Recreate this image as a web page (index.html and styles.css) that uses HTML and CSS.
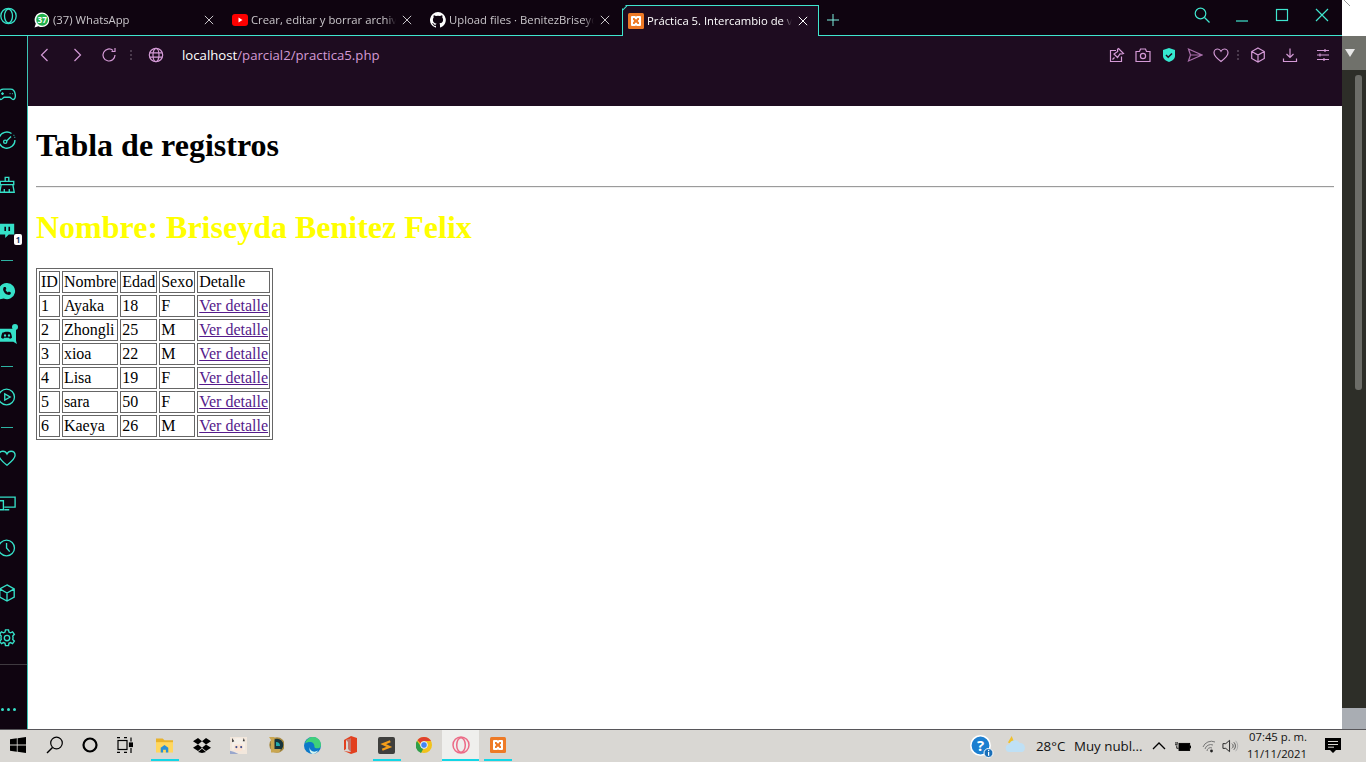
FILE: index.html
```html
<!DOCTYPE html>
<html lang="es">
<head>
<meta charset="utf-8">
<title>Práctica 5. Intercambio de variables</title>
<link rel="stylesheet" href="styles.css">
</head>
<body>
<div class="desktop">
  <div class="window">
    <div class="browser">
      <header class="tabstrip">
        <svg class="opera-logo" viewBox="0 0 18 18" width="18" height="18"><circle cx="8.500" cy="9" r="7.700"/><ellipse cx="8.500" cy="9" rx="4" ry="6.800"/></svg>
        <div class="tab">
          <svg class="favicon" viewBox="0 0 16 16"><path d="M8 .500a7.300 7.300 0 0 1 0 14.600c-1.300 0-2.500-.3-3.600-.9L.5 15.500l1.300-3.800A7.300 7.300 0 0 1 8 .500z" fill="#fff"/><circle cx="8.200" cy="7.800" r="6" fill="#22b14c"/><text x="8.200" y="10.500" class="fav-count">37</text></svg>
          <span class="tab-title">(37) WhatsApp</span>
          <svg class="tab-close" viewBox="0 0 12 12"><path d="M1 1l10 10M11 1L1 11"/></svg>
        </div>
        <div class="tab">
          <svg class="favicon" viewBox="0 0 16 16"><rect y="2" width="16" height="12" rx="3" fill="#f00"/><path d="M6.500 5.500l4 2.500-4 2.500z" fill="#fff"/></svg>
          <span class="tab-title">Crear, editar y borrar archivos en GitHub</span>
          <svg class="tab-close" viewBox="0 0 12 12"><path d="M1 1l10 10M11 1L1 11"/></svg>
        </div>
        <div class="tab">
          <svg class="favicon" viewBox="0 0 16 16"><path fill="#fff" d="M8 0a8 8 0 0 0-2.500 15.600c.4.100.5-.2.500-.4v-1.400c-2.200.5-2.700-1-2.700-1-.4-.9-.9-1.200-.9-1.200-.7-.5.100-.5.100-.5.800.1 1.200.8 1.200.8.700 1.200 1.900.9 2.300.7.100-.5.300-.9.500-1.100-1.800-.2-3.600-.9-3.600-4 0-.9.300-1.600.8-2.100-.1-.2-.4-1 .1-2.100 0 0 .7-.2 2.200.8a7.600 7.600 0 0 1 4 0c1.500-1 2.200-.8 2.200-.8.400 1.100.2 1.900.1 2.100.5.600.8 1.300.8 2.100 0 3.100-1.900 3.700-3.700 3.900.3.300.6.800.6 1.500v2.200c0 .2.100.5.600.4A8 8 0 0 0 8 0z"/></svg>
          <span class="tab-title">Upload files · BenitezBriseyda/parcial2</span>
          <svg class="tab-close" viewBox="0 0 12 12"><path d="M1 1l10 10M11 1L1 11"/></svg>
        </div>
        <div class="tab tab-active">
          <svg class="favicon" viewBox="0 0 16 16"><rect width="16" height="16" rx="1.500" fill="#ee7a26"/><path class="xampp-mark" d="M4 4h3l1 1.500L9 4h3v3.500L11 8l1 .5V12H9l-1-1.500L7 12H4V8.500L5 8 4 7.500z"/></svg>
          <span class="tab-title">Práctica 5. Intercambio de variables</span>
          <svg class="tab-close" viewBox="0 0 12 12"><path d="M1 1l10 10M11 1L1 11"/></svg>
        </div>
        <svg class="new-tab" viewBox="0 0 12 12" width="12" height="12"><path d="M6 0v12M0 6h12"/></svg>
        <div class="win-controls">
          <span class="win-btn"><svg viewBox="0 0 16 16" width="16" height="16"><circle cx="6.500" cy="6.500" r="5.300"/><path d="M10.500 10.500l5 5"/></svg></span>
          <span class="win-btn"><svg viewBox="0 0 16 16" width="16" height="16"><path d="M2 14h12"/></svg></span>
          <span class="win-btn"><svg viewBox="0 0 16 16" width="16" height="16"><rect x="2.500" y="2.500" width="11" height="11"/></svg></span>
          <span class="win-btn"><svg viewBox="0 0 16 16" width="16" height="16"><path d="M2 2l12 12M14 2L2 14"/></svg></span>
        </div>
      </header>
      <div class="browser-body">
        <nav class="sidebar">
          <span class="side-item"><svg viewBox="0 0 20 20"><path d="M6 3.500h8c3 0 4.700 2.500 5.200 6 .4 3-.6 5.500-2.400 5.500-1.700 0-2.300-2.500-4-2.500H7.200c-1.700 0-2.300 2.500-4 2.500C1.400 15 .4 12.500.8 9.500c.5-3.500 2.200-6 5.200-6z"/><path d="M5 7v3M3.500 8.500h3M13 8.500h.8M15.500 8.500h.8"/></svg></span>
          <span class="side-item"><svg viewBox="0 0 20 20"><path d="M15 2.800A9 9 0 1 0 18.800 10M9.500 11l5-5"/><circle cx="8" cy="12" r="1.800"/><path d="M18.300 7h.8M17.300 4.800h.8"/></svg></span>
          <span class="side-item"><svg viewBox="0 0 20 20"><path d="M8 6V1.500h4V6M2.500 6h15v3.500h-15zM3.500 9.500L2 18h16l-1.500-8.500M7 18v-3.500M12.500 18v-3.500"/></svg></span>
          <span class="side-item"><svg viewBox="0 0 20 20"><path class="solid" d="M2 2h16v12h-6l-4 4v-4H2z" transform="translate(0 1)"/><path class="cut" d="M8 6.500v4.500M12.500 6.500v4.500"/></svg><span class="side-badge">1</span></span>
          <span class="side-sep"></span>
          <span class="side-item"><svg viewBox="0 0 20 20"><path class="solid" d="M10 1a9 9 0 1 1-3.700 17.200L0 19.500l1.700-5.300A9 9 0 0 1 10 1z"/><path class="solid-dark" d="M6.500 5.500l2 .1.800 2.200-1 1.200c.6 1.200 1.500 2 2.600 2.600l1.200-1 2.200 1-.2 1.800c-.8 1-2 1.200-3 .9-2.800-.8-4.500-2.500-5.300-5.100-.3-1.200 0-2.300.7-3.700z"/></svg></span>
          <span class="side-item"><svg viewBox="0 0 20 20"><path class="solid" d="M0 2h20v13l1 4-4-2.500H0z"/><path class="solid-dark" d="M6 6c1-.5 2-.8 2.500-.8h3c.5 0 1.500.3 2.500.8 1 1.800 1.500 4 1.500 6-.7.700-1.700 1-2.500 1l-.7-1H6.700l-.7 1c-.8 0-1.800-.3-2.500-1 0-2 .5-4.200 1.500-6z"/><ellipse class="solid" cx="7.800" cy="9.500" rx="1.200" ry="1.400"/><ellipse class="solid" cx="12.200" cy="9.500" rx="1.200" ry="1.400"/></svg><span class="side-dot"></span></span>
          <span class="side-sep"></span>
          <span class="side-item"><svg viewBox="0 0 20 20"><circle cx="9.500" cy="10" r="8.800"/><path d="M7.500 6.500l6 3.500-6 3.500z"/></svg></span>
          <span class="side-sep"></span>
          <span class="side-item"><svg viewBox="0 0 20 20"><path d="M10 18C5 14 1 11 1 7c0-3 2-4.500 4.500-4.500 2 0 3.500 1 4.500 3 1-2 2.500-3 4.500-3C17 2.500 19 4 19 7c0 4-4 7-9 11z"/></svg></span>
          <span class="side-item"><svg viewBox="0 0 20 20"><path d="M1 3.500h18v11H7M12.500 17.500H7M1 7.500h5v10H1z"/></svg></span>
          <span class="side-item"><svg viewBox="0 0 20 20"><circle cx="9.500" cy="10" r="8.800"/><path d="M9.500 4.500V10l3.500 4"/></svg></span>
          <span class="side-item"><svg viewBox="0 0 20 20"><path d="M10 1l8 4.500v9L10 19l-8-4.500v-9zM2 5.500l8 4.500 8-4.500M10 10v9"/></svg></span>
          <span class="side-item"><svg viewBox="0 0 20 20"><circle cx="10" cy="10" r="3"/><path d="M8.300 1h3.400l.5 2.500 1.700.8 2.300-1.200 2 2.800-1.800 1.800.3 2-.3 2 1.800 1.800-2 2.800-2.300-1.200-1.700.8-.5 2.500H8.300l-.5-2.500-1.700-.8-2.300 1.200-2-2.800 1.800-1.800-.3-2 .3-2-1.800-1.800 2-2.800 2.300 1.200 1.700-.8z"/></svg></span>
          <span class="side-rule"></span>
          <span class="side-more"><i></i><i></i><i></i></span>
        </nav>
        <div class="content">
          <div class="toolbar">
            <span class="tool"><svg viewBox="0 0 16 16"><path d="M10.500 2L4.500 8l6 6"/></svg></span>
            <span class="tool"><svg viewBox="0 0 16 16"><path d="M5.500 2l6 6-6 6"/></svg></span>
            <span class="tool"><svg viewBox="0 0 16 16"><path d="M14 8A6 6 0 1 1 12 3.500M14 1v3.500h-3.500"/></svg></span>
            <span class="tool-dots"><i></i><i></i><i></i></span>
            <span class="tool tool-globe"><svg viewBox="0 0 16 16"><circle cx="8" cy="8" r="6.700"/><ellipse cx="8" cy="8" rx="3" ry="6.700"/><path d="M1.800 5.800h12.400M1.800 10.200h12.400"/></svg></span>
            <span class="url"><b>localhost</b>/parcial2/practica5.php</span>
            <div class="tool-right">
              <span class="tool-small"><svg viewBox="0 0 16 16"><path d="M7 3.500H1.500v11h11V9.500"/><path d="M9.500 1.500l5 5-1.300.5-2.200-.2-2.500 3.700-3.500-3.500 3.700-2.500-.2-2.200zM5.500 10.500L3.500 12.500"/></svg></span>
              <span class="tool-small"><svg viewBox="0 0 16 16"><path d="M1 4.500h3.500l1-2.500h5l1 2.500H15v10H1z"/><circle cx="8" cy="9" r="2.600"/></svg></span>
              <span class="tool-small"><svg viewBox="0 0 16 16"><path class="shield" d="M8 1l6 2v6c0 3-3 5-6 6-3-1-6-3-6-6V3z"/><path class="shield-check" d="M5 8l2.200 2.200L11 6.500"/></svg></span>
              <span class="tool-small tool-dim"><svg viewBox="0 0 16 16"><path d="M1.500 2l13.500 6-13.500 6L3.500 8zM3.500 8H15"/></svg></span>
              <span class="tool-small"><svg viewBox="0 0 16 16"><path d="M8 14.500C4 11.500 1 9.200 1 5.800 1 3.300 3 2 4.700 2c1.500 0 2.500.8 3.300 2.200C8.800 2.800 9.800 2 11.300 2 13 2 15 3.300 15 5.800c0 3.400-3 5.700-7 8.700z"/></svg></span>
              <span class="tool-dots tool-dots-right"><i></i><i></i><i></i></span>
              <span class="tool-wide"><svg viewBox="0 0 16 16"><path d="M8 1l6.300 3.500v7L8 15l-6.300-3.500v-7zM1.700 4.500L8 8l6.300-3.500M8 8v7"/></svg></span>
              <span class="tool-wide"><svg viewBox="0 0 16 16"><path d="M8 1.500v8.500M4.500 7L8 10.500 11.500 7M1.500 11.500v3h13v-3"/></svg></span>
              <span class="tool-wide"><svg viewBox="0 0 16 16"><path d="M2 3.500h12M2 8h12M2 12.500h12M10 2v3M5 6.500v3M9 11v3"/></svg></span>
            </div>
          </div>
          <main class="page">
            <h1 class="title">Tabla de registros</h1>
            <hr class="rule">
            <h1 class="title title-name">Nombre: Briseyda Benitez Felix</h1>
            <table class="records">
              <tr><td>ID</td><td>Nombre</td><td>Edad</td><td>Sexo</td><td>Detalle</td></tr>
              <tr><td>1</td><td>Ayaka</td><td>18</td><td>F</td><td><a href="#d1">Ver detalle</a></td></tr>
              <tr><td>2</td><td>Zhongli</td><td>25</td><td>M</td><td><a href="#d2">Ver detalle</a></td></tr>
              <tr><td>3</td><td>xioa</td><td>22</td><td>M</td><td><a href="#d3">Ver detalle</a></td></tr>
              <tr><td>4</td><td>Lisa</td><td>19</td><td>F</td><td><a href="#d4">Ver detalle</a></td></tr>
              <tr><td>5</td><td>sara</td><td>50</td><td>F</td><td><a href="#d5">Ver detalle</a></td></tr>
              <tr><td>6</td><td>Kaeya</td><td>26</td><td>M</td><td><a href="#d6">Ver detalle</a></td></tr>
            </table>
          </main>
        </div>
      </div>
    </div>
    <aside class="behind">
      <div class="behind-top"><svg viewBox="0 0 8 8" width="8" height="8"><path d="M1 0l6 6"/></svg></div>
      <div class="behind-head"><span class="arrow"></span></div>
      <div class="behind-track"><span class="thumb"></span></div>
      <div class="behind-foot"></div>
    </aside>
  </div>
  <footer class="taskbar">
    <span class="slot slot-start"><svg viewBox="0 0 16 16" width="16" height="16"><path fill="#000" d="M0 2.300l6.800-1v6.300H0zM7.600 1.200L16 0v7.600H7.600zM0 8.400h6.800v6.300l-6.800-1zM7.600 8.400H16V16l-8.400-1.200z"/></svg></span>
    <span class="slot"><svg viewBox="0 0 18 18" width="18" height="18"><circle cx="10.500" cy="7" r="5.800" fill="none" stroke="#000" stroke-width="1.200"/><path d="M6.500 11.500L1 17" stroke="#000" stroke-width="1.400"/></svg></span>
    <span class="slot slot-narrow slot-cortana"><svg viewBox="0 0 16 16" width="16" height="16"><circle cx="8" cy="8" r="6.500" fill="none" stroke="#000" stroke-width="2.200"/></svg></span>
    <span class="slot slot-narrow"><svg viewBox="0 0 16 16" width="16" height="16" fill="none" stroke="#000" stroke-width="1.200"><path d="M0 .6h3M7 .6h3M0 15.400h3M7 15.400h3"/><rect x="1" y="3.500" width="9" height="9"/><path d="M14 .5v4M14 11v5"/><rect x="12.500" y="6" width="3" height="3.500" fill="#000"/></svg></span>
    <span class="slot slot-open slot-files"><svg viewBox="0 0 18 16" width="17" height="16"><path fill="#e8b22a" d="M0 1h7l2 2h9v4H0z"/><path fill="#ffd75e" d="M0 5h18v11H0z"/><path fill="#2a8fd8" d="M5 16v-5l4-3 4 3v5h-2.500v-3h-3v3z"/></svg></span>
    <span class="slot"><svg viewBox="0 0 18 16" width="18" height="16" fill="#000"><path d="M5 1L0 4.300l5 3.200 4-3.200zM13 1L9 4.300l4 3.200 5-3.200zM0 10.700L5 14l4-3.300-4-3.200zM18 10.700L13 14l-4-3.300 4-3.200zM5 15l4 1 4-1-4-3.300z"/></svg></span>
    <span class="slot"><svg viewBox="0 0 16 16" width="17" height="17"><rect width="16" height="16" fill="#f2e7dc"/><path fill="#f5efe8" d="M2 6c0-4 3-5 6-5s6 1 6 5v6H2z"/><path fill="#fbe3d3" d="M4 7h8v5c-2 2-6 2-8 0z"/><circle cx="6" cy="9.500" r="1" fill="#3e4d8c"/><circle cx="10.500" cy="9.500" r="1" fill="#3e4d8c"/><path fill="#9aa7cc" d="M0 16v-3l4 1 4 2z"/><path fill="#333" d="M2 1l2 3-2 1zM13 1l1 3-2 0z"/></svg></span>
    <span class="slot"><svg viewBox="0 0 16 18" width="16" height="18"><circle cx="9" cy="9" r="7" fill="#16343c" stroke="#a8893f" stroke-width="1.400"/><path fill="#c9a650" d="M1 1h5.500v12H13l-2 3.500H3V4z"/><path fill="#2aa" d="M8 6a4 4 0 0 1 4 4H8z"/></svg></span>
    <span class="slot"><svg viewBox="0 0 16 16" width="17" height="17"><circle cx="8" cy="8" r="8" fill="#0c78c8"/><path fill="#3fd07a" d="M1 6c1-3.500 4-6 7.500-6C12.500 0 16 3 16 7.500c0 2-1.500 3.200-3.500 3.200-1.500 0-2.700-.6-2.700-1.600C10 7 8.500 4.800 5.800 4.800 3.700 4.800 2 5.500 1 6z"/><path fill="#d6f4f0" d="M5.200 9.500c0 2.500 2 4.300 4.500 4.300 1.300 0 2.500-.4 3.500-1.100-1 2-3 3.300-5 3.300-2.500-.5-3.300-3.500-3-6.500z"/></svg></span>
    <span class="slot"><svg viewBox="0 0 14 18" width="14" height="18"><path fill="#e2401f" d="M8 0l6 2v14l-6 2-7-3 7 1V2.500L3 4v9l-2 1.500V4z"/><path fill="#b32314" d="M3 4l5-1.500V16l-3-3V6z" opacity=".55"/></svg></span>
    <span class="slot slot-open"><svg viewBox="0 0 18 18" width="17" height="17"><rect width="18" height="18" rx="2" fill="#3f3f3d"/><path fill="none" stroke="#f59e1b" stroke-width="2.400" d="M13 4.500L5.500 7.500l6.500 3-7.500 3"/></svg></span>
    <span class="slot"><svg viewBox="0 0 16 16" width="16" height="16"><circle cx="8" cy="8" r="8" fill="#f1c21b"/><path fill="#e0402f" d="M8 0a8 8 0 0 1 7 4H8a4 4 0 0 0-3.600 2.200L1.500 3.200A8 8 0 0 1 8 0z"/><path fill="#2f9e4a" d="M1 4l3.300 4.500a4 4 0 0 0 3 3.300L5 16A8 8 0 0 1 1 4z"/><circle cx="8" cy="8" r="3.400" fill="#4285f4" stroke="#fff" stroke-width=".9"/></svg></span>
    <span class="slot slot-active"><svg viewBox="0 0 18 18" width="18" height="18" fill="none" stroke="#ec6a86" stroke-width="1.500"><circle cx="9" cy="9" r="8"/><ellipse cx="9" cy="9" rx="4.300" ry="7.300"/></svg></span>
    <span class="slot slot-open"><svg viewBox="0 0 16 16" width="16" height="16"><rect width="16" height="16" rx="1.500" fill="#ee7a26"/><path class="xampp-mark" d="M4 4h3l1 1.500L9 4h3v3.500L11 8l1 .5V12H9l-1-1.500L7 12H4V8.500L5 8 4 7.500z"/></svg></span>
    <div class="tray">
      <span class="tray-help"><svg viewBox="0 0 24 24" width="24" height="24"><circle cx="10.500" cy="10.500" r="9.700" fill="#1c7fd0" stroke="#fff" stroke-width="1.600"/><text x="10.500" y="16" class="help-q">?</text><circle cx="18.500" cy="18" r="4.500" fill="#1a6fb8" stroke="#fff" stroke-width="1"/><rect x="18" y="16.800" width="1.200" height="4" fill="#fff"/><rect x="18" y="14.800" width="1.200" height="1.200" fill="#fff"/></svg></span>
      <span class="tray-cloud"><svg viewBox="0 0 24 20" width="23" height="19"><path d="M4 8L8 1l2 5 5 1-5 3z" fill="#f0c02c"/><path d="M6 18a4 4 0 0 1-.5-8 6 6 0 0 1 11-1.500A5 5 0 0 1 19 18z" fill="#bfe0f5"/></svg></span>
      <span class="tray-temp">28°C</span>
      <span class="tray-weather">Muy nubl...</span>
      <span class="tray-icon tray-caret"><svg viewBox="0 0 14 8" width="14" height="8"><path d="M1 7l6-6 6 6" fill="none" stroke="#000" stroke-width="1.300"/></svg></span>
      <span class="tray-icon tray-batt"><svg viewBox="0 0 18 12" width="16" height="11"><path d="M0 4h3M1 1v2M2.500 1v2M2 5v3h2" fill="none" stroke="#000"/><rect x="4.500" y="2.500" width="12" height="8" fill="#000" stroke="#000"/><rect x="16.500" y="5" width="1.500" height="3" fill="#000"/></svg></span>
      <span class="tray-icon tray-wifi"><svg viewBox="0 0 14 14" width="14" height="14" fill="none" stroke="#777" stroke-width="1"><path d="M1 8a9 9 0 0 1 12-5M3 10a6 6 0 0 1 8-4M5 12a3.500 3.500 0 0 1 5-3"/><circle cx="9.500" cy="12" r="1.400" fill="#222" stroke="none"/></svg></span>
      <span class="tray-icon tray-sound"><svg viewBox="0 0 18 14" width="17" height="14" fill="none" stroke="#222"><path d="M1 4.500h3L8 1v12L4 9.500H1z"/><path d="M10.500 4.500a3 3 0 0 1 0 5M12.500 3a5.500 5.500 0 0 1 0 8" stroke="#555"/><path d="M14.500 1.500a8 8 0 0 1 0 11" stroke="#aaa"/></svg></span>
      <span class="clock"><span>07:45 p. m.</span><span>11/11/2021</span></span>
      <span class="tray-note"><svg viewBox="0 0 16 16" width="16" height="16"><path fill="#000" d="M0 0h16v12h-5l-3 3-3-3H0z"/><path d="M3 3.500h10M3 6.500h10M3 9.200h6" stroke="#d9d7d3" stroke-width="1"/></svg></span>
    </div>
  </footer>
</div>
</body>
</html>
```
FILE: styles.css
```css
* { box-sizing: border-box; }
html, body { margin: 0; padding: 0; height: 100%; overflow: hidden; }
body { font-family: "Liberation Serif", serif; background: #fff; }

.desktop { width: 1366px; height: 762px; display: flex; flex-direction: column; }
.window { flex: 1; display: flex; min-height: 0; }
.browser { width: 1342px; display: flex; flex-direction: column; }

/* tab strip */
.tabstrip {
  height: 36px; background: #0f0410; display: flex; padding-left: 28px; padding-top: 5px;
  position: relative; font-family: "Open Sans", sans-serif; font-size: 11.300px; color: #c9c6ca;
  border-bottom: 1px solid #3fe6cf; flex: none;
}
.opera-logo { position: absolute; left: 0; top: 7px; fill: none; stroke: #35e0c8; stroke-width: 1.300; }
.tab { width: 198px; height: 30px; display: flex; align-items: center; padding: 0 0 1px 6px; flex: none; }
.favicon { width: 16px; height: 16px; flex: none; margin-right: 3px; }
.fav-count { font: bold 8px "Open Sans", sans-serif; fill: #fff; text-anchor: middle; }
.xampp-mark { fill: none; stroke: #fff; stroke-width: 2; stroke-linejoin: round; }
.tab-title {
  flex: 1; min-width: 0; white-space: nowrap; overflow: hidden;
  -webkit-mask-image: linear-gradient(to right, #000 calc(100% - 10px), transparent 100%);
  mask-image: linear-gradient(to right, #000 calc(100% - 10px), transparent 100%);
}
.tab-close { width: 10px; height: 10px; flex: none; margin: 0 12px 0 6px; fill: none; stroke: #c9c6ca; stroke-width: 1.200; }
.tab-active {
  height: 31px; width: 197px; background: #1e0c20; color: #fff; padding-left: 5px;
  border: 1px solid #3fe6cf; border-bottom: 0; margin-bottom: -1px;
  clip-path: polygon(4px 0, 100% 0, 100% 100%, 0 100%, 0 4px);
  position: relative;
}
.tab-active::before {
  content: ""; position: absolute; left: -1px; top: 3px; width: 6px; height: 1px;
  background: #3fe6cf; transform: rotate(-45deg); transform-origin: 1px 0;
}
.tab-active .tab-close { stroke: #fff; margin-right: 10px; }
.new-tab { align-self: center; margin: -1px 0 0 8px; fill: none; stroke: #7ff0e0; stroke-width: 1; flex: none; }
.win-controls { margin-left: auto; display: flex; margin-top: -5px; padding-right: 0; }
.win-btn { width: 40px; height: 29px; display: flex; align-items: center; justify-content: center; }
.win-btn svg { fill: none; stroke: #3fe6cf; stroke-width: 1.200; }

.browser-body { flex: 1; display: flex; min-height: 0; }

/* sidebar */
.sidebar {
  width: 28px; flex: none; background: #0f0410; border-right: 1px solid #3cc4b4;
  overflow: hidden; display: flex; flex-direction: column; padding-top: 36.500px;
}
.side-item { height: 45px; width: 14px; flex: none; display: flex; align-items: center; justify-content: center; position: relative; }
.side-item svg { width: 18px; height: 18px; flex: none; fill: none; stroke: #35e0c8; stroke-width: 1.500; overflow: visible; }
.side-item svg .solid { fill: #35e0c8; stroke: none; }
.side-item svg .solid-dark { fill: #0f0410; stroke: none; }
.side-item svg .cut { stroke: #0f0410; stroke-width: 1.800; }
.side-badge {
  position: absolute; left: 14px; top: 26px; width: 8px; height: 11px; background: #fff; border-radius: 2px;
  font: bold 8px/11px "Open Sans", sans-serif; color: #1a3a6a; text-align: center;
}
.side-dot { position: absolute; left: 12px; top: 10px; width: 6px; height: 6px; background: #35e0c8; border-radius: 50%; }
.side-sep { height: 16px; flex: none; display: flex; align-items: center; padding-left: 1px; }
.side-sep::before { content: ""; width: 12px; height: 1px; background: #35e0c8; opacity: .8; }
.side-rule { height: 1px; background: #3f3a40; margin-top: 3px; flex: none; }
.side-more { display: flex; gap: 3px; margin-top: 43px; padding-left: 1px; flex: none; }
.side-more i { width: 3px; height: 3px; background: #35e0c8; border-radius: 50%; }

/* toolbar */
.content { flex: 1; min-width: 0; display: flex; flex-direction: column; }
.toolbar {
  height: 70px; flex: none; background: #1e0c20; display: flex; align-items: flex-start;
  padding: 0 2px 0 1px; font-family: "Open Sans", sans-serif; font-size: 13.200px; color: #d39ad4;
}
.tool, .tool-small, .tool-wide, .tool-dots { height: 38px; display: flex; align-items: center; justify-content: center; flex: none; }
.tool { width: 32px; }
.tool svg, .tool-small svg, .tool-wide svg { width: 16px; height: 16px; fill: none; stroke: #d49ad6; stroke-width: 1.200; }
.tool-globe { width: 38px; }
.tool-dots { width: 12px; flex-direction: column; gap: 2px; }
.tool-dots i { width: 2px; height: 2px; background: #4a3a4c; }
.tool-dots-right { width: 8px; }
.url { height: 38px; line-height: 38px; margin-left: 7px; white-space: nowrap; }
.url b { font-weight: 400; color: #fff; }
.tool-right { margin-left: auto; display: flex; }
.tool-small { width: 26px; }
.tool-wide { width: 32px; }
.tool-small .shield { fill: #35e8d0; stroke: none; }
.tool-small .shield-check { stroke: #1e0c20; stroke-width: 1.500; }
.tool-dim svg { stroke: #a96fab; }
.tool-wide:last-child { width: 34px; }

/* page */
.page { flex: 1; min-height: 0; background: #fff; padding: 0 8px; overflow: hidden; color: #000; font-size: 16px; }
.title { font-size: 32px; margin: 21.440px 0; font-weight: bold; }
.title-name { color: #ffff00; }
.rule { margin: 0; border: 0; border-top: 1px solid #9b9b9b; border-bottom: 1px solid #eeeeee; height: 2px; }
.records { border: 1px solid #666; border-spacing: 2px; border-collapse: separate; }
.records td { border: 1px solid #666; padding: 1px; }
.records a { color: #551a8b; }

/* behind the window */
.behind { width: 24px; display: flex; flex-direction: column; flex: none; }
.behind-top { height: 36px; background: #fff; padding: 0 0 0 1px; }
.behind-top svg { display: block; fill: none; stroke: #999; stroke-width: 1; }
.behind-head { height: 34px; background: #70716b; padding: 13px 0 0 3px; }
.arrow { display: block; width: 0; height: 0; border: 5px solid transparent; border-top: 8px solid #e8e8e8; border-bottom: 0; }
.behind-track { flex: 1; background: #2d2e28; padding: 5px 0 0 13px; }
.thumb { display: block; width: 7px; height: 315px; background: #6c6d68; border-radius: 3px; }
.behind-foot { height: 21px; background: #a9adb3; }

/* taskbar */
.taskbar {
  height: 33px; flex: none; background: #d9d7d3; border-top: 1px solid #57565a; display: flex;
  font-family: "Open Sans", sans-serif; color: #111;
}
.slot { width: 37px; height: 32px; display: flex; align-items: center; justify-content: center; flex: none; position: relative; padding-bottom: 2px; }
.slot-start { width: 36px; }
.slot-narrow { width: 35px; }
.slot-cortana { margin-left: -1px; }
.slot-files { margin-left: 4px; }
.slot-open::after { content: ""; position: absolute; left: 5px; right: 4px; bottom: 1px; height: 2px; background: #12d6e6; }
.slot-active { background: #efefed; }
.slot-active::after { content: ""; position: absolute; left: 0; right: 0; bottom: 1px; height: 2px; background: #12d6e6; }
.tray { margin-left: auto; display: flex; align-items: center; height: 32px; position: relative; }
.tray-help { width: 24px; height: 24px; margin-right: 10px; margin-top: 2px; }
.tray-cloud { width: 23px; height: 19px; margin-right: 9px; margin-top: -3px; }
.help-q { font: bold 15px "Open Sans", sans-serif; fill: #fff; text-anchor: middle; }
.tray-temp { font-size: 13.300px; width: 38px; white-space: nowrap; }
.tray-weather { font-size: 13.300px; width: 77px; white-space: nowrap; }
.tray-icon { display: flex; align-items: center; justify-content: center; height: 32px; }
.tray-caret { width: 16px; }
.tray-batt { width: 32px; }
.tray-wifi { width: 20px; }
.tray-sound { width: 22px; }
.clock { width: 72px; display: flex; flex-direction: column; align-items: flex-end; padding: 0 6px 2px 0; font-size: 11.300px; line-height: 17px; white-space: nowrap; }
.tray-note { width: 40px; margin-right: 13px; display: flex; justify-content: center; }
```
